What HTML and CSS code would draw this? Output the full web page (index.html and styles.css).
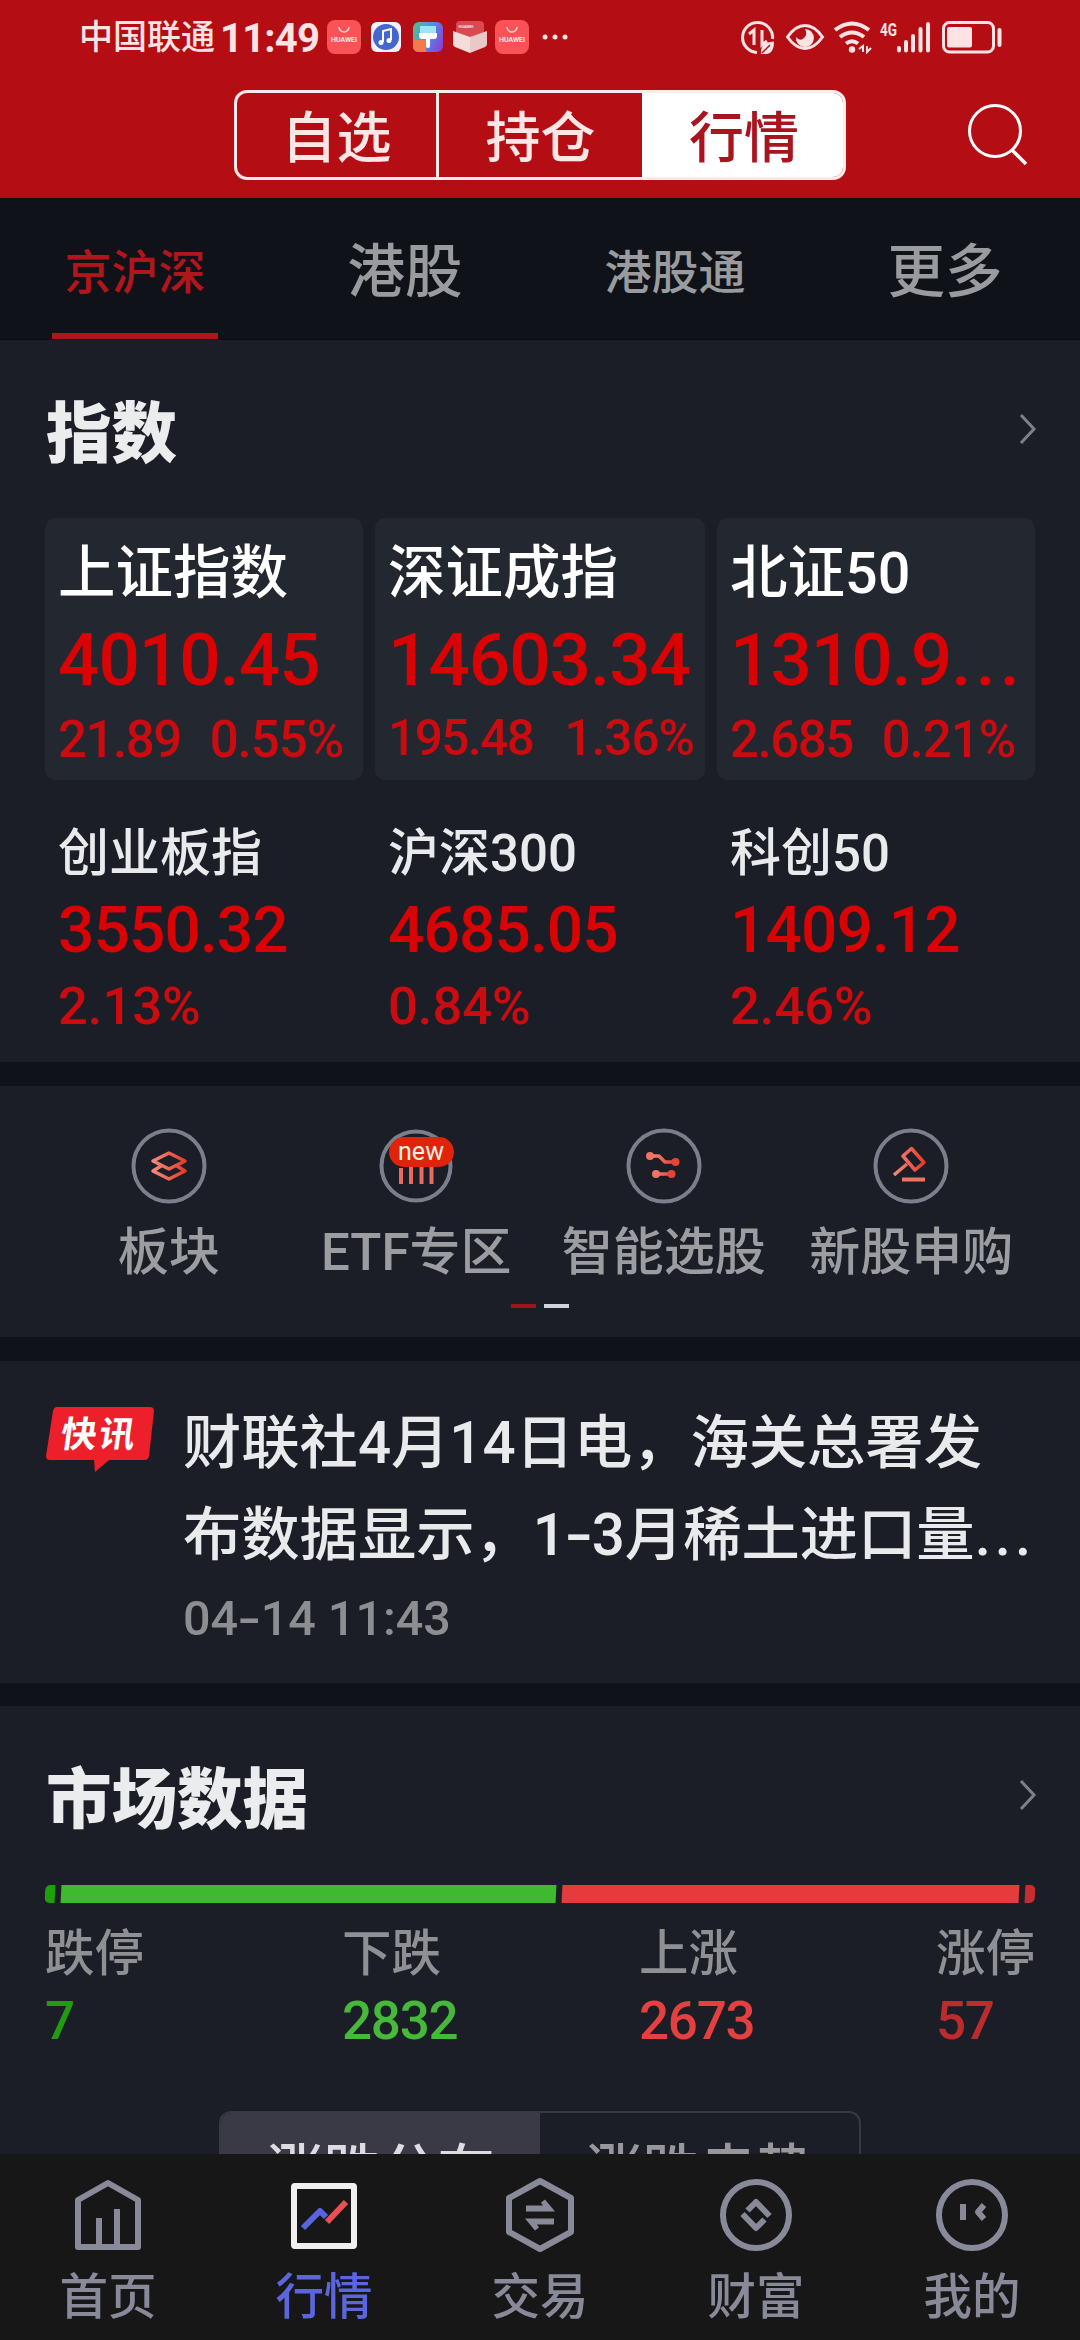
FILE: index.html
```html
<!DOCTYPE html>
<html lang="zh-CN">
<head>
  <meta charset="UTF-8">
  <meta name="viewport" content="width=device-width, initial-scale=1.0">
  <link rel="stylesheet" href="styles.css">
  <title>行情</title>
</head>
<body>
  <div class="app">
    <header class="header">
      <div class="status-bar">
        <span class="carrier">中国联通</span>
        <span class="clock">11:49</span>
        <div class="notices">
          <svg width="34" height="34" viewBox="0 0 34 34">
            <rect width="34" height="34" rx="8" fill="#fb5258"/>
            <path d="M12 7a5 5 0 0 0 10 0" fill="none" stroke="#ffd9d9" stroke-width="1.5"/>
            <text x="17" y="22" class="tiny-brand">HUAWEI</text>
          </svg>
          <svg class="music" width="30" height="30" viewBox="0 0 30 30">
            <rect width="30" height="30" rx="6" fill="#f5f2fb"/>
            <circle cx="15" cy="15" r="13" fill="#4565cf"/>
            <path d="M12 20V9l8-2v11" fill="none" stroke="#fff" stroke-width="2"/>
            <circle cx="10" cy="20.500" r="2.500" fill="#fff"/>
            <circle cx="18" cy="18.500" r="2.500" fill="#fff"/>
          </svg>
          <svg class="theme" width="30" height="30" viewBox="0 0 30 30">
            <defs>
              <linearGradient id="themeBg" x1="0" y1="0.300" x2="1" y2="0.700">
                <stop offset="0" stop-color="#55b98f"/>
                <stop offset="0.450" stop-color="#4d93ea"/>
                <stop offset="1" stop-color="#8b42d0"/>
              </linearGradient>
            </defs>
            <rect width="30" height="30" rx="6" fill="url(#themeBg)"/>
            <path d="M0 18l13 0v12H6q-6 0-6-6z" fill="#f07c4c"/>
            <rect x="7" y="4" width="16" height="7" fill="#9be3f5"/>
            <path d="M6 11h18v3q0 3-3 3h-4v7q0 2-2 2t-2-2v-7H9q-3 0-3-3z" fill="#fff"/>
          </svg>
          <svg class="box" width="34" height="32" viewBox="0 0 34 32">
            <rect x="3" y="0" width="28" height="20" rx="4" fill="#d94a50"/>
            <path d="M0 10l17 6v16L2 26q-2-1-2-3z" fill="#f3dcda"/>
            <path d="M34 10l-17 6v16l15-6q2-1 2-3z" fill="#e9c9c7"/>
            <text x="13" y="7" class="tiny-brand lid">HUAWEI</text>
          </svg>
          <svg class="store" width="34" height="34" viewBox="0 0 34 34">
            <rect width="34" height="34" rx="8" fill="#fb5258"/>
            <path d="M12 7a5 5 0 0 0 10 0" fill="none" stroke="#ffd9d9" stroke-width="1.5"/>
            <text x="17" y="22" class="tiny-brand">HUAWEI</text>
          </svg>
          <svg class="dots" width="26" height="6" viewBox="0 0 26 6" fill="#fde3e3">
            <circle cx="3" cy="3" r="2.500"/>
            <circle cx="13" cy="3" r="2.500"/>
            <circle cx="23" cy="3" r="2.500"/>
          </svg>
        </div>
        <!-- data saver, eye comfort, wifi, mobile signal, battery -->
        <svg class="system" width="264" height="36" viewBox="740 18 264 36" fill="none" stroke="#fde3e3">
          <path d="M757 51.500A15 15 0 1 1 772.500 38" stroke-width="3"/>
          <path d="M749 33l5-4v15M762 29v15l5-4" stroke-width="3"/>
          <path d="M761 53q-1-12 13-12.500q0 13-9 12.500z" fill="#fde3e3" stroke="none"/>
          <path d="M762 52l8-8" stroke="#b40e14" stroke-width="1.500"/>
          <path d="M787.500 36q8-11.500 17.500-11.500T822.500 36q-8 11.500-17.500 11.500T787.500 36z" stroke-width="3"/>
          <path d="M805 28a9 9 0 1 1-9 8q4 5 8 1t1-9z" fill="#fde3e3" stroke="none"/>
          <g stroke-width="4">
            <path d="M835 29q17-13 34 0"/>
            <path d="M840 36q12-9 24 0"/>
            <path d="M846 42.500q6-4.500 12 0"/>
          </g>
          <circle cx="852" cy="48.500" r="3.200" fill="#fde3e3" stroke="none"/>
          <path d="M859 48l4-3v6M867 45v6l4-4" stroke-width="2"/>
          <text x="880" y="35" class="net" textLength="17" lengthAdjust="spacingAndGlyphs">4G</text>
          <g stroke-width="4" stroke-linecap="round">
            <path d="M899 47v2.500M906 41v8.500M913 35v14.500M920.500 28v21.500M928 23v26.500"/>
          </g>
          <rect x="943.500" y="21.500" width="50" height="29.500" rx="6" stroke-width="3"/>
          <rect x="947" y="26" width="25" height="20.500" rx="2" fill="#fde3e3" stroke="none"/>
          <path d="M999.500 29v15" stroke-width="4" stroke-linecap="round"/>
        </svg>
      </div>
      <div class="switcher">
        <a class="switch">自选</a>
        <a class="switch">持仓</a>
        <a class="switch active">行情</a>
      </div>
      <svg class="search" width="62" height="64" viewBox="0 0 62 64" fill="none" stroke="#fff" stroke-width="3">
        <circle cx="28" cy="28" r="25.500"/>
        <path d="M45 47l14 14" stroke-width="3.500"/>
      </svg>
    </header>

    <nav class="tabs">
      <a class="tab small active">京沪深</a>
      <a class="tab">港股</a>
      <a class="tab small">港股通</a>
      <a class="tab">更多</a>
    </nav>

    <section class="indexes">
      <div class="section-head">
        <h2>指数</h2>
        <svg class="arrow" width="18" height="32" viewBox="0 0 18 32"><path d="M2 2l13 14L2 30"/></svg>
      </div>
      <div class="index-grid">
        <div class="index card">
          <div class="name">上证指数</div>
          <div class="price">4010.45</div>
          <div class="change"><span>21.89</span><span>0.55%</span></div>
        </div>
        <div class="index card">
          <div class="name">深证成指</div>
          <div class="price">14603.34</div>
          <div class="change long"><span>195.48</span><span>1.36%</span></div>
        </div>
        <div class="index card">
          <div class="name">北证50</div>
          <div class="price">1310.9<span class="more">...</span></div>
          <div class="change"><span>2.685</span><span>0.21%</span></div>
        </div>
        <div class="index">
          <div class="name">创业板指</div>
          <div class="price">3550.32</div>
          <div class="change">2.13%</div>
        </div>
        <div class="index">
          <div class="name">沪深300</div>
          <div class="price">4685.05</div>
          <div class="change">0.84%</div>
        </div>
        <div class="index">
          <div class="name">科创50</div>
          <div class="price">1409.12</div>
          <div class="change">2.46%</div>
        </div>
      </div>
    </section>

    <section class="shortcuts">
      <svg width="0" height="0" class="defs">
        <defs>
          <linearGradient id="warm" x1="0" y1="0" x2="1" y2="0">
            <stop offset="0" stop-color="#f58a7c"/>
            <stop offset="1" stop-color="#e43c2c"/>
          </linearGradient>
        </defs>
      </svg>
      <div class="shortcut-row">
        <a class="shortcut">
          <svg width="76" height="76" viewBox="0 0 76 76">
            <circle class="ring" cx="38" cy="38" r="35.500"/>
            <path class="glyph" d="M22 33l16-8 16 8-16 8zM30 38l-8 5 16 8 16-8-8-5"/>
          </svg>
          <span>板块</span>
        </a>
        <a class="shortcut">
          <svg width="76" height="76" viewBox="0 0 76 76">
            <circle class="ring" cx="38" cy="38" r="34.500"/>
            <path d="M23 40v16M33 38v18M43.500 38v18M53.500 38v18" stroke="#e86b60" stroke-width="4"/>
          </svg>
          <em class="badge">new</em>
          <span>ETF专区</span>
        </a>
        <a class="shortcut">
          <svg width="76" height="76" viewBox="0 0 76 76">
            <circle class="ring" cx="38" cy="38" r="35.500" fill="#1a222d"/>
            <path class="glyph" d="M24 28h9l6 6h11M30 46h16"/>
            <g fill="#f07466"><circle cx="24" cy="28" r="4"/><circle cx="30" cy="46" r="4"/></g>
            <g fill="#e64434"><circle cx="49.500" cy="34" r="4"/><circle cx="45.500" cy="46" r="4"/></g>
          </svg>
          <span>智能选股</span>
        </a>
        <a class="shortcut">
          <svg width="76" height="76" viewBox="0 0 76 76">
            <circle class="ring" cx="38" cy="38" r="35.500" fill="#1a222d"/>
            <path class="glyph" d="M38.500 20.500l-8.500 7.500 12 14 9-7.500zM34 36l-13 11"/>
            <path d="M29 51.500h23" stroke="#ef7364" stroke-width="4"/>
          </svg>
          <span>新股申购</span>
        </a>
      </div>
      <div class="pager"><i class="on"></i><i></i></div>
    </section>

    <section class="news">
      <svg class="tag" width="108" height="66" viewBox="0 0 108 66">
        <path d="M11 0h93q4 0 4 4l-5 45q-1 4-4 4H63L49 65l-1-12H4q-4 0-4-4L7 4q1-4 4-4z" fill="#ec1f2b"/>
        <text x="19" y="40" transform="skewX(-8)" textLength="74">快讯</text>
      </svg>
      <div class="news-body">
        <p>财联社4月14日电，海关总署发<br>布数据显示，1<b class="dash">-</b>3月稀土进口量<span class="more">...</span></p>
        <time>04<b class="dash">-</b>14 11:43</time>
      </div>
    </section>

    <section class="market">
      <div class="section-head">
        <h2>市场数据</h2>
        <svg class="arrow" width="18" height="32" viewBox="0 0 18 32"><path d="M2 2l13 14L2 30"/></svg>
      </div>
      <div class="ratio">
        <i class="limit-down"></i>
        <i class="down"></i>
        <i class="up"></i>
        <i class="limit-up"></i>
      </div>
      <div class="counts">
        <div class="count limit-down"><span>跌停</span><strong>7</strong></div>
        <div class="count down"><span>下跌</span><strong>2832</strong></div>
        <div class="count up"><span>上涨</span><strong>2673</strong></div>
        <div class="count limit-up"><span>涨停</span><strong>57</strong></div>
      </div>
      <div class="chart-tabs">
        <a class="active">涨跌分布</a>
        <a>涨跌走势</a>
      </div>
    </section>

    <footer class="bottom-nav">
      <a>
        <svg width="80" height="80" viewBox="0 0 80 80">
          <path d="M10 25L40 8l30 17v47H10zM31 71V43M49 71V34"/>
        </svg>
        <span>首页</span>
      </a>
      <a class="active">
        <svg width="80" height="80" viewBox="0 0 80 80">
          <rect x="10" y="11" width="60" height="60" rx="1" stroke="#efefef"/>
          <path d="M19 53l17-17 6 6" stroke="#5a64e0"/>
          <path d="M43 47l19-20" stroke="#e85050"/>
        </svg>
        <span>行情</span>
      </a>
      <a>
        <svg width="80" height="80" viewBox="0 0 80 80">
          <path d="M40 6l31 17v34L40 74 9 57V23z"/>
          <path class="solid" d="M26 36.500v-6h17l-2-3 4-3 10 12zM54 43.500v6H37l2 3-4 3-10-12z"/>
        </svg>
        <span>交易</span>
      </a>
      <a>
        <svg width="80" height="80" viewBox="0 0 80 80">
          <circle cx="40" cy="40" r="33"/>
          <path d="M31.500 35.500l8.500-8.500 13.500 14M48.500 44.500L40 53 26.500 39"/>
        </svg>
        <span>财富</span>
      </a>
      <a>
        <svg width="80" height="80" viewBox="0 0 80 80">
          <circle cx="40" cy="40" r="33"/>
          <path d="M31 29v16M52 30l-6 7 6 7"/>
        </svg>
        <span>我的</span>
      </a>
    </footer>
  </div>
</body>
</html>
```
FILE: styles.css
```css
* {
  box-sizing: border-box;
}

body {
  margin: 0;
  background-color: #0f1319;
  font-family: Roboto, "Noto Sans CJK SC", sans-serif;
  font-weight: 500;
  color: #e9eaec;
}

.app {
  width: 1080px;
  height: 2340px;
  display: flex;
  flex-direction: column;
  overflow: hidden;
}

svg {
  display: block;
  flex-shrink: 0;
}

/* header */
.header {
  position: relative;
  height: 198px;
  background-color: #b40e14;
}

.status-bar {
  height: 90px;
  padding: 0 76px 16px 79px;
  display: flex;
  align-items: center;
  color: #fde3e3;
}

.carrier {
  width: 141px;
  font-size: 34px;
  line-height: 74px;
}

.clock {
  width: 107px;
  font-size: 40px;
  font-weight: 700;
  letter-spacing: -0.8px;
  line-height: 74px;
  padding-top: 3px;
}

.notices {
  display: flex;
  align-items: center;
}

.notices .music {
  margin-left: 10px;
}

.notices .theme {
  margin-left: 12px;
}

.notices .box {
  margin-left: 10px;
}

.notices .store {
  margin-left: 8px;
}

.notices .dots {
  margin-left: 13px;
}

.tiny-brand {
  font-size: 7px;
  font-weight: 500;
  fill: #fff;
  text-anchor: middle;
}

.tiny-brand.lid {
  font-size: 4px;
}

.system {
  margin-left: auto;
}

.net {
  font-size: 19px;
  font-weight: 700;
  fill: #fde3e3;
  stroke: none;
}

.switcher {
  display: grid;
  grid-template-columns: 199px 206px 201px;
  width: 612px;
  height: 90px;
  margin: 0 auto;
  border: 3px solid #fdeaea;
  border-radius: 13px;
  overflow: hidden;
}

.switch {
  font-size: 55px;
  line-height: 90px;
  text-align: center;
  color: #fde6e6;
}

.switch + .switch {
  border-left: 3px solid #fdeaea;
}

.switch.active {
  background-color: #fff;
  border-color: #fff;
  color: #a9141e;
}

.search {
  position: absolute;
  left: 967px;
  top: 103px;
}

/* market tabs */
.tabs {
  display: flex;
  height: 142px;
  border-bottom: 1px solid #0a0d11;
}

.tab {
  flex: 1;
  display: flex;
  flex-direction: column;
  align-items: center;
  font-size: 57.5px;
  line-height: 149px;
  color: #9a9b9e;
}

.tab.small {
  font-size: 47px;
}

.tab.active {
  color: #b3151c;
}

.tab.active::after {
  content: "";
  width: 166px;
  height: 6px;
  margin-top: -14px;
  background-color: #b0151b;
}

/* sections */
section {
  background-color: #1b1e26;
  padding: 0 45px;
  flex-shrink: 0;
}

.section-head {
  display: flex;
  align-items: center;
  justify-content: space-between;
  height: 178px;
}

h2 {
  margin: 12px 0 0 1px;
  font-size: 65.5px;
  font-weight: 900;
  line-height: 90px;
  color: #ebecee;
}

.arrow {
  margin-right: -2px;
  fill: none;
  stroke: #7d8089;
  stroke-width: 3;
}

.indexes {
  height: 722px;
}

.index-grid {
  display: grid;
  grid-template-columns: 318px 330px 318px;
  column-gap: 12px;
}

.index {
  padding: 37px 13px 0;
}

.index .name {
  font-size: 51px;
  line-height: 74px;
}

.index .price {
  font-size: 64px;
  letter-spacing: -0.9px;
  line-height: 80px;
  color: #d90205;
}

.index .change {
  font-size: 52.5px;
  line-height: 70px;
  color: #cb0b10;
}

.index.card {
  height: 262px;
  padding: 16px 0 0 13px;
  border-radius: 10px;
  background-color: #23272f;
}

.card .name {
  font-size: 57.5px;
  line-height: 80px;
  color: #fff;
}

.card .price {
  font-size: 73px;
  letter-spacing: -1.1px;
  line-height: 92px;
}

.card .more {
  letter-spacing: 4px;
}

.card .change {
  display: flex;
  gap: 29px;
  font-size: 51px;
  letter-spacing: -1px;
  line-height: 67px;
}

.card .change span:first-child {
  letter-spacing: -1.5px;
}

.card .change.long {
  gap: 31px;
  font-size: 49.5px;
  line-height: 65px;
}

/* shortcuts */
.shortcuts {
  height: 251px;
  margin-top: 24px;
  padding-top: 42px;
}

.defs {
  position: absolute;
}

.shortcut-row {
  display: grid;
  grid-template-columns: repeat(4, 1fr);
}

.shortcut {
  position: relative;
  display: flex;
  flex-direction: column;
  align-items: center;
  gap: 17px;
  font-size: 51px;
  line-height: 64px;
  color: #9c9da1;
  white-space: nowrap;
}

.ring {
  fill: none;
  stroke: #7b7f8b;
  stroke-width: 4;
}

.glyph {
  fill: none;
  stroke: url(#warm);
  stroke-width: 3.5;
  stroke-linejoin: round;
}

.badge {
  position: absolute;
  left: 96px;
  top: 9px;
  width: 65px;
  height: 30px;
  border-radius: 15px;
  background-color: #e0240c;
  font-size: 25px;
  font-style: normal;
  font-weight: 400;
  line-height: 29px;
  text-align: center;
  color: #fff0e0;
}

.pager {
  display: flex;
  justify-content: center;
  gap: 8px;
  margin-top: 19px;
}

.pager i {
  width: 25px;
  height: 4px;
  background-color: #d3d4d9;
}

.pager .on {
  background-color: #a0141c;
}

/* news */
.news {
  display: flex;
  height: 322px;
  margin-top: 24px;
  padding: 36px 45px 0 46px;
}

.tag {
  margin-top: 10px;
}

.tag text {
  font-family: "Noto Sans CJK SC", sans-serif;
  font-size: 36px;
  font-weight: 700;
  fill: #fff;
}

.news-body {
  margin-left: 29px;
  white-space: nowrap;
}

.news p {
  margin: 0;
  font-size: 58.3px;
  line-height: 92px;
}

.news .more {
  letter-spacing: 4px;
}

.news time {
  display: block;
  margin-top: 3px;
  font-size: 48.5px;
  line-height: 70px;
  color: #8d8e92;
}

.dash {
  display: inline-block;
  font-weight: inherit;
  transform: scaleX(1.4);
  margin: 0 3px;
}

/* market data */
.market {
  height: 448px;
  margin-top: 23px;
  overflow: hidden;
}

.ratio {
  display: flex;
  gap: 6px;
  height: 18px;
  margin-top: 1px;
}

.ratio i {
  transform: skewX(-3deg);
}

.ratio .limit-down {
  width: 10px;
  border-radius: 5px 0 0 5px;
  background-color: #1ea00b;
}

.ratio .down {
  flex: 495;
  background-color: #3fb92f;
}

.ratio .up {
  flex: 457;
  background-color: #e73a3c;
}

.ratio .limit-up {
  width: 10px;
  border-radius: 0 5px 5px 0;
  background-color: #c92c30;
}

.counts {
  display: grid;
  grid-template-columns: repeat(4, 297px);
  margin-top: 19px;
}

.count span,
.count strong {
  display: block;
}

.count span {
  font-size: 49.5px;
  line-height: 64px;
  color: #8f9094;
}

.count strong {
  font-size: 53px;
  font-weight: 500;
  letter-spacing: -1.3px;
  line-height: 70px;
}

.count.limit-down strong {
  color: #239a14;
}

.count.down strong {
  color: #46b93a;
}

.count.up strong {
  color: #e3403f;
}

.count.limit-up strong {
  color: #bd2b2d;
}

.chart-tabs {
  display: flex;
  width: 642px;
  margin: 55px auto 0;
  border: 2px solid #363843;
  border-radius: 12px;
  overflow: hidden;
}

.chart-tabs a {
  flex: 1;
  font-size: 57px;
  line-height: 118px;
  text-align: center;
  color: #97989c;
}

.chart-tabs .active {
  background-color: #393a45;
  color: #dcdde2;
}

/* bottom navigation */
.bottom-nav {
  display: flex;
  height: 186px;
  padding-top: 21px;
  background-color: #171717;
}

.bottom-nav a {
  flex: 1;
  display: flex;
  flex-direction: column;
  align-items: center;
  gap: 12px;
  font-size: 48.5px;
  line-height: 62px;
  color: #888a9a;
}

.bottom-nav svg {
  fill: none;
  stroke: #888a9a;
  stroke-width: 6;
  stroke-linejoin: round;
}

.bottom-nav .solid {
  fill: #888a9a;
  stroke: none;
}

.bottom-nav .active {
  color: #5b66dc;
}
```
